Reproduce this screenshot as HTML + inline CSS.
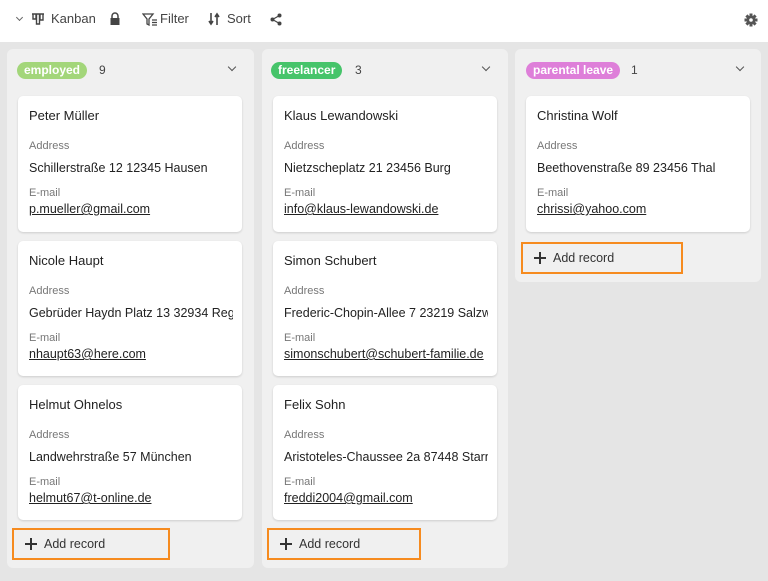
<!DOCTYPE html>
<html><head><meta charset="utf-8"><style>
*{margin:0;padding:0;box-sizing:border-box}
body{width:768px;height:581px;overflow:hidden;background:#e5e5e5;font-family:"Liberation Sans",sans-serif;position:relative;color:#222}
.top{position:absolute;left:0;top:0;width:768px;height:42px;background:#fff}
.t{position:absolute;top:11px;font-size:13px;color:#444}
.col{position:absolute;background:#f0f0f0;border-radius:6px}
.pill{position:absolute;top:13px;height:17px;border-radius:9px;color:#fff;font-size:12px;font-weight:bold;padding:0 7px;line-height:17px}
.cnt{position:absolute;top:14px;font-size:12px;color:#444}
.chev{position:absolute;top:15px;width:6px;height:6px;border-right:1.3px solid #555;border-bottom:1.3px solid #555;transform:rotate(45deg)}
.card{position:absolute;left:11px;width:224px;height:136px;background:#fff;border-radius:5px;box-shadow:0 1px 2px rgba(0,0,0,.15)}
.card .n{position:absolute;left:11px;top:12px;font-size:13px;color:#222}
.card .l1{position:absolute;left:11px;top:44px;font-size:11px;color:#777}
.card .v{position:absolute;left:11px;top:65px;font-size:12.5px;color:#222;white-space:nowrap;width:204px;overflow:hidden}
.card .l2{position:absolute;left:11px;top:91px;font-size:11px;color:#777}
.card .e{position:absolute;left:11px;top:106px;font-size:12.5px;color:#222;text-decoration:underline}
.add{position:absolute;border:2px solid #f68b1f;height:32px;font-size:12.5px;color:#333;line-height:28px;padding-left:30px}
.add:before{content:"";position:absolute;left:11px;top:8px;width:12px;height:1.6px;background:#333;margin-top:5px}
.add:after{content:"";position:absolute;left:16.2px;top:8px;width:1.6px;height:12px;background:#333}
</style></head><body>
<div class="top">
<div style="position:absolute;left:17px;top:15px;width:5px;height:5px;border-right:1.2px solid #666;border-bottom:1.2px solid #666;transform:rotate(45deg)"></div>
<svg style="position:absolute;left:31px;top:12px" width="14" height="14" viewBox="0 0 14 14"><path d="M1 2h12M2 2v5h3V2M5.5 2v10h3V2M9 2v6h3V2" fill="none" stroke="#444" stroke-width="1.4"/></svg>
<div class="t" style="left:51px">Kanban</div>
<svg style="position:absolute;left:109px;top:12px" width="12" height="14" viewBox="0 0 12 14"><path d="M3 6V4a3 3 0 0 1 6 0v2" fill="none" stroke="#444" stroke-width="1.5"/><rect x="1.5" y="6" width="9" height="7" fill="#444"/></svg>
<svg style="position:absolute;left:142px;top:13px" width="16" height="13" viewBox="0 0 16 13"><path d="M1 1h10L7 6v6L5 11V6z" fill="none" stroke="#444" stroke-width="1.3"/><path d="M10 7h5M10 9.5h5M10 12h5" stroke="#444" stroke-width="1.2"/></svg>
<div class="t" style="left:160px">Filter</div>
<svg style="position:absolute;left:208px;top:12px" width="12" height="14" viewBox="0 0 12 14"><path d="M3 1v11M1 9l2 3 2-3M9 13V2M7 5l2-3 2 3" fill="none" stroke="#444" stroke-width="1.6"/></svg>
<div class="t" style="left:227px">Sort</div>
<svg style="position:absolute;left:270px;top:13px" width="12" height="13" viewBox="0 0 12 13"><circle cx="2.5" cy="6.5" r="2" fill="#444"/><circle cx="9.5" cy="2.5" r="2" fill="#444"/><circle cx="9.5" cy="10.5" r="2" fill="#444"/><path d="M2.5 6.5L9.5 2.5M2.5 6.5l7 4" stroke="#444" stroke-width="1.2"/></svg>
<svg style="position:absolute;left:744px;top:13px" width="14" height="14" viewBox="0 0 14 14"><g fill="#555"><circle cx="7" cy="7" r="4.5"/><rect x="5.5" y="0.5" width="3" height="13"/><rect x="0.5" y="5.5" width="13" height="3"/><rect x="5.5" y="0.5" width="3" height="13" transform="rotate(45 7 7)"/><rect x="5.5" y="0.5" width="3" height="13" transform="rotate(-45 7 7)"/></g><circle cx="7" cy="7" r="1.8" fill="#fff"/></svg>
</div>

<div class="col" style="left:7px;top:49px;width:247px;height:519px">
<div class="pill" style="left:10px;background:#a3d67a">employed</div><div class="cnt" style="left:92px">9</div><div class="chev" style="left:222px"></div>
<div class="card" style="top:47px"><div class="n">Peter Müller</div><div class="l1">Address</div><div class="v">Schillerstraße 12 12345 Hausen</div><div class="l2">E-mail</div><div class="e">p.mueller@gmail.com</div></div>
<div class="card" style="top:192px;height:135px"><div class="n">Nicole Haupt</div><div class="l1">Address</div><div class="v">Gebrüder Haydn Platz 13 32934 Regensburg</div><div class="l2">E-mail</div><div class="e">nhaupt63@here.com</div></div>
<div class="card" style="top:336px;height:135px"><div class="n">Helmut Ohnelos</div><div class="l1">Address</div><div class="v">Landwehrstraße 57 München</div><div class="l2">E-mail</div><div class="e">helmut67@t-online.de</div></div>
</div>
<div class="add" style="left:12px;top:528px;width:158px">Add record</div>

<div class="col" style="left:262px;top:49px;width:246px;height:519px">
<div class="pill" style="left:9px;background:#46c46a">freelancer</div><div class="cnt" style="left:93px">3</div><div class="chev" style="left:221px"></div>
<div class="card" style="top:47px"><div class="n">Klaus Lewandowski</div><div class="l1">Address</div><div class="v">Nietzscheplatz 21 23456 Burg</div><div class="l2">E-mail</div><div class="e">info@klaus-lewandowski.de</div></div>
<div class="card" style="top:192px;height:135px"><div class="n">Simon Schubert</div><div class="l1">Address</div><div class="v">Frederic-Chopin-Allee 7 23219 Salzwedel</div><div class="l2">E-mail</div><div class="e">simonschubert@schubert-familie.de</div></div>
<div class="card" style="top:336px;height:135px"><div class="n">Felix Sohn</div><div class="l1">Address</div><div class="v">Aristoteles-Chaussee 2a 87448 Starnberg</div><div class="l2">E-mail</div><div class="e">freddi2004@gmail.com</div></div>
</div>
<div class="add" style="left:267px;top:528px;width:154px">Add record</div>

<div class="col" style="left:515px;top:49px;width:246px;height:233px">
<div class="pill" style="left:11px;background:#de7fd9">parental leave</div><div class="cnt" style="left:116px">1</div><div class="chev" style="left:222px"></div>
<div class="card" style="top:47px"><div class="n">Christina Wolf</div><div class="l1">Address</div><div class="v">Beethovenstraße 89 23456 Thal</div><div class="l2">E-mail</div><div class="e">chrissi@yahoo.com</div></div>
</div>
<div class="add" style="left:521px;top:242px;width:162px">Add record</div>
</body></html>
